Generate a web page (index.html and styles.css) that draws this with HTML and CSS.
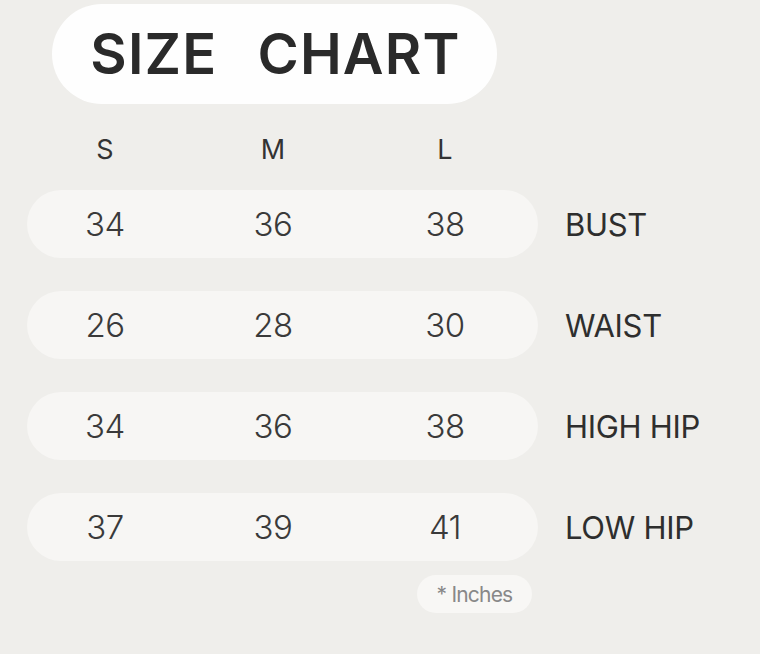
FILE: index.html
```html
<!DOCTYPE html>
<html>
<head>
<meta charset="utf-8">
<link rel="stylesheet" href="styles.css">
</head>
<body>
<div class="page">
  <div class="title"><span>SIZE</span><span>CHART</span></div>
  <div class="table">
    <div class="cols head"><span>S</span><span>M</span><span>L</span></div>
    <div></div>
    <div class="cols pill"><span>34</span><span>36</span><span>38</span></div>
    <div class="label">BUST</div>
    <div class="cols pill"><span>26</span><span>28</span><span>30</span></div>
    <div class="label">WAIST</div>
    <div class="cols pill"><span>34</span><span>36</span><span>38</span></div>
    <div class="label">HIGH HIP</div>
    <div class="cols pill"><span>37</span><span>39</span><span>41</span></div>
    <div class="label">LOW HIP</div>
  </div>
  <div class="note-row"><span class="note">* Inches</span></div>
</div>
</body>
</html>
```
FILE: styles.css
```css
html, body {
  margin: 0;
  padding: 0;
  background: #efeeeb;
}
body {
  width: 760px;
  height: 654px;
  overflow: hidden;
  font-family: Inter, "Liberation Sans", sans-serif;
  color: #333;
}
.page {
  padding: 4px 0 0 27px;
}
.title {
  margin-left: 25px;
  width: 445px;
  height: 100px;
  border-radius: 50px;
  background: #fefefe;
  display: flex;
  align-items: center;
  justify-content: center;
  gap: 40px;
  padding-left: 2px;
  box-sizing: border-box;
  font-size: 56px;
  font-weight: 600;
  letter-spacing: 1.2px;
  color: #2a2a2a;
}
.table {
  margin-top: 25px;
  display: grid;
  grid-template-columns: 511px auto;
  row-gap: 33px;
  column-gap: 27px;
  align-items: center;
}
.cols {
  display: grid;
  grid-template-columns: 156px 180px 164px;
  justify-items: center;
  align-items: center;
}
.head {
  height: 40px;
  margin-bottom: -12px;
  font-size: 27px;
  font-weight: 400;
  color: #333;
}
.pill {
  height: 68px;
  border-radius: 34px;
  background: #f7f6f4;
  font-size: 33px;
  font-weight: 300;
  color: #3a3a3a;
  letter-spacing: -0.5px;
}
.label {
  font-size: 31px;
  font-weight: 400;
  color: #2e2e2e;
  letter-spacing: -0.3px;
}
.note-row {
  margin-top: 14px;
  padding-left: 390px;
}
.note {
  display: inline-flex;
  align-items: center;
  justify-content: center;
  width: 115px;
  height: 38px;
  border-radius: 19px;
  background: #f8f7f5;
  font-size: 21px;
  color: #888;
  letter-spacing: -0.8px;
}
```
